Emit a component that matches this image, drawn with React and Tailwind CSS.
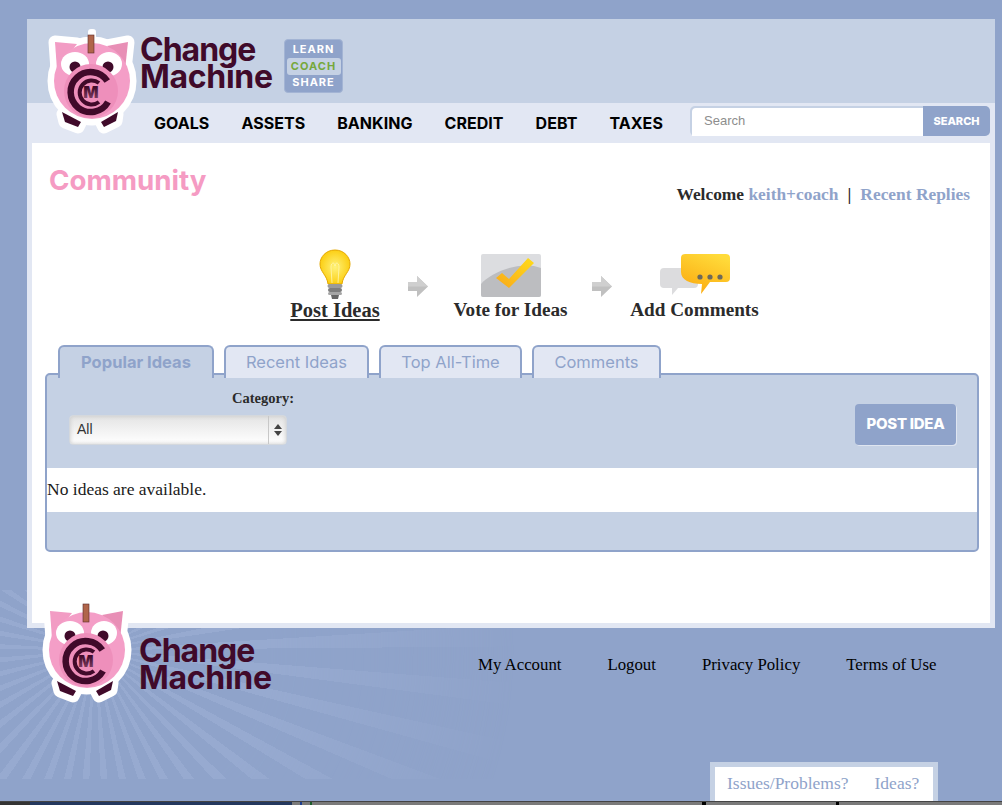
const serif = "font-['Liberation_Serif',serif]"
const sans = "font-['Inter',sans-serif]"

function Pig({ className }) {
    return (
        <svg viewBox="0 0 90 106" className={className}>
            <defs>
                <linearGradient id="pigM" x1="0" y1="0" x2="0" y2="1">
                    <stop offset="0.25" stopColor="#400a2a" />
                    <stop offset="1" stopColor="#8d4a6d" />
                </linearGradient>
            </defs>
            {/* white sticker outline */}
            <g fill="#fff" stroke="#fff" strokeWidth="13" strokeLinejoin="round">
                <circle cx="45" cy="53" r="38" />
                <path d="M8 14 L30 16 L10 42 Z" />
                <path d="M81 14 L60 18 L78 42 Z" />
                <path d="M16 86 L33 95 L31 99 L18 94 Z" />
                <path d="M70 86 L55 95 L57 99 L69 93 Z" />
            </g>
            <rect x="41" y="1" width="8" height="12" fill="#fff" rx="3" />
            <path d="M15 84 L34 94 L31 99 L18 94 Z" fill="#400a2a" />
            <path d="M71 84 L54 94 L57 99 L69 93 Z" fill="#400a2a" />
            <path d="M8 14 L30 16 L10 42 Z" fill="#f29cc4" />
            <path d="M81 14 L60 18 L78 42 Z" fill="#e88fb6" />
            <circle cx="45" cy="53" r="38" fill="#f49ec7" />
            <rect x="41" y="7" width="6" height="18" fill="#b0654a" stroke="#5a2a2a" strokeWidth="0.6" />
            <ellipse cx="28" cy="36" rx="14" ry="12" fill="#fff" />
            <ellipse cx="62" cy="36" rx="13" ry="12" fill="#fff" />
            <circle cx="28" cy="39" r="5.5" fill="#400a2a" />
            <circle cx="61" cy="39" r="5.5" fill="#400a2a" />
            <circle cx="44" cy="63" r="27" fill="#ee8fbb" />
            <path d="M 60.3 53 A 20 20 0 1 0 61 74" fill="none" stroke="#400a2a" strokeWidth="6.5" />
            <path d="M 52 55 A 12 12 0 1 0 52 74" fill="none" stroke="#400a2a" strokeWidth="4" />
            <text x="44" y="70" textAnchor="middle" fontSize="16" fontWeight="900" fontFamily="Inter, sans-serif" fill="url(#pigM)">M</text>
        </svg>
    )
}

function Wordmark({ className }) {
    return (
        <div className={`${sans} w-[134px] font-bold text-[#400a2a] text-[32px] leading-[27px] ${className}`}>
            <div className="tracking-[-1px]">Change</div>
            <div className="tracking-[-0.3px]">Machine</div>
        </div>
    )
}

function Bulb() {
    return (
        <svg viewBox="0 0 32 50" className="w-8 h-[50px]">
            <defs>
                <radialGradient id="bulb" cx="0.5" cy="0.5" r="0.6">
                    <stop offset="0" stopColor="#fff27a" />
                    <stop offset="1" stopColor="#fbc800" />
                </radialGradient>
            </defs>
            <path d="M16 1 C7 1 1 8 1 15 C1 23 8 26 9 35 L23 35 C24 26 31 23 31 15 C31 8 25 1 16 1 Z" fill="url(#bulb)" stroke="#e5a800" strokeWidth="1" />
            <path d="M13 34 L12 18 C12 13 16 13 16 17 C16 13 20 13 20 18 L19 34" fill="none" stroke="#fff6b0" strokeWidth="0.8" />
            <rect x="8.5" y="35" width="15" height="4" rx="2" fill="#9a9a9a" />
            <rect x="9" y="39" width="14" height="4" rx="2" fill="#7d7d7d" />
            <rect x="9" y="43" width="14" height="3" rx="1.5" fill="#a5a5a5" />
            <path d="M12 46 H20 L19 50 H13 Z" fill="#666" />
        </svg>
    )
}

function StepArrow() {
    return (
        <svg viewBox="0 0 20 21" className="w-5 h-[21px]">
            <path d="M0 6 H9 V0 L20 10.5 L9 21 V15 H0 Z" fill="#c0c0c0" />
            <path d="M0 6 H9 V0 L20 10.5 H0 Z" fill="#cfcfcf" />
        </svg>
    )
}

function VoteIcon() {
    return (
        <svg viewBox="0 0 60 43" className="w-[60px] h-[43px]">
            <defs>
                <linearGradient id="check" x1="0" y1="1" x2="1" y2="0">
                    <stop offset="0" stopColor="#f9a81a" />
                    <stop offset="1" stopColor="#ffdc1a" />
                </linearGradient>
            </defs>
            <rect width="60" height="43" rx="2" fill="#dcdde0" />
            <path d="M0 30 C10 18 40 6 60 14 V41 A2 2 0 0 1 58 43 H2 A2 2 0 0 1 0 41 Z" fill="#bcbdc0" />
            <path d="M15 24 L21 19 L28 25 L47 4 L53 9 L28 34 Z" fill="url(#check)" />
        </svg>
    )
}

function ChatIcon() {
    return (
        <svg viewBox="0 0 70 42" className="w-[70px] h-[42px]">
            <defs>
                <linearGradient id="chat" x1="0.2" y1="1" x2="0.7" y2="0">
                    <stop offset="0" stopColor="#fba90f" />
                    <stop offset="1" stopColor="#ffdb3a" />
                </linearGradient>
            </defs>
            <path d="M4 14 H34 A4 4 0 0 1 38 18 V30 A4 4 0 0 1 34 34 H18 L12 41 V34 H4 A4 4 0 0 1 0 30 V18 A4 4 0 0 1 4 14 Z" fill="#dcdcde" />
            <path d="M25 0 H66 A4 4 0 0 1 70 4 V24 A4 4 0 0 1 66 28 H50 L41 40 L42 30 C30 30 21 26 21 18 V4 A4 4 0 0 1 25 0 Z" fill="url(#chat)" />
            <circle cx="40" cy="23" r="2.6" fill="#6d6a5a" />
            <circle cx="50" cy="23" r="2.6" fill="#6d6a5a" />
            <circle cx="60" cy="23" r="2.6" fill="#6d6a5a" />
        </svg>
    )
}

const navItems = ['GOALS', 'ASSETS', 'BANKING', 'CREDIT', 'DEBT', 'TAXES']
const tabs = [
    { label: 'Popular Ideas', w: 'w-[156px]', active: true },
    { label: 'Recent Ideas', w: 'w-[145px]' },
    { label: 'Top All-Time', w: 'w-[143px]' },
    { label: 'Comments', w: 'w-[129px]' },
]
const footerLinks = ['My Account', 'Logout', 'Privacy Policy', 'Terms of Use']

export default function App() {
    return (
        <div className="relative h-[805px] overflow-hidden bg-[#8fa3ca] pt-[19px]">
            {/* sun rays behind the footer */}
            <div className="absolute left-0 right-0 top-[590px] h-[189px] bg-[repeating-conic-gradient(from_-1.5deg_at_95px_60px,#97aad0_0deg_3deg,#8fa3ca_3deg_8deg)] [mask-image:radial-gradient(circle_at_95px_60px,black_170px,transparent_420px)]" />

            <div className="relative ml-[27px] w-[968px]">
                {/* header */}
                <div className="h-[84px] bg-[#c5d1e4] flex">
                    <Wordmark className="ml-[113px] mt-[17px]" />
                    <div className={`${sans} ml-[10px] mt-[20px] w-[59px] h-[54px] rounded-sm bg-[#8fa3ca] border border-[#a3b4d4] flex flex-col items-center pt-[2px] text-[11px] leading-[15px] font-bold tracking-[1px] text-white`}>
                        <span>LEARN</span>
                        <span className="mt-[1px] w-[54px] h-[17px] rounded-[3px] bg-[#c5d1e4] text-[#76a83c] text-center leading-[17px]">COACH</span>
                        <span>SHARE</span>
                    </div>
                </div>

                {/* nav */}
                <div className="h-[40px] bg-[#e2e7f3] flex items-center">
                    <nav className={`${sans} ml-[127px] flex gap-8 text-[16px] tracking-[0.05px] font-bold text-black`}>
                        {navItems.map((item) => (
                            <span key={item}>{item}</span>
                        ))}
                    </nav>
                    <div className="ml-auto mr-[5px] -mt-1 flex h-[30px] w-[300px] rounded-[5px] bg-[#c5d1e4] pl-[2px] pt-[2px]">
                        <div className="flex-1 bg-white rounded-tl-[4px] pl-[12px] pt-[3px] text-[13px] text-[#8d8d8d] font-['Liberation_Sans',sans-serif]">Search</div>
                        <div className={`${sans} -mt-[2px] w-[67px] bg-[#8fa3ca] rounded-r-[5px] flex items-center justify-center text-[11px] font-extrabold text-white`}>SEARCH</div>
                    </div>
                </div>

                {/* content */}
                <div className="border-x-[5px] border-b-[5px] border-[#e2e7f3] bg-white h-[485px]">
                    <div className="flex items-start justify-between h-[60px] pl-[17px] pr-[20px] pt-[19px]">
                        <h1 className={`${sans} text-[27.7px] leading-[36px] font-bold text-[#f59bc3]`}>Community</h1>
                        <div className={`${serif} mt-[22px] text-[17.4px] leading-[21px] font-bold text-[#2b2b2b]`}>
                            Welcome <span className="text-[#8fa3ca]">keith+coach</span>
                            <span className="mx-[9px]">|</span>
                            <span className="text-[#8fa3ca]">Recent Replies</span>
                        </div>
                    </div>

                    {/* steps */}
                    <div className={`${serif} mt-[46px] h-[73px] flex items-end pl-[258px] text-[19.2px] leading-[24px] font-bold whitespace-nowrap text-[#2b2b2b]`}>
                        <div className="w-[90px] flex flex-col items-center">
                            <Bulb />
                            <span className="underline -mt-[1px] text-[20.5px]">Post Ideas</span>
                        </div>
                        <div className="ml-[28px] mb-[25px]"><StepArrow /></div>
                        <div className="ml-[25px] w-[115px] flex flex-col items-center">
                            <VoteIcon />
                            <span className="mt-[1px]">Vote for Ideas</span>
                        </div>
                        <div className="ml-[24px] mb-[25px]"><StepArrow /></div>
                        <div className="ml-[19px] w-[127px] flex flex-col items-center">
                            <ChatIcon />
                            <span className="mt-[2px]">Add Comments</span>
                        </div>
                    </div>

                    {/* tabs + panel */}
                    <div className="mt-[23px] ml-[13px] w-[934px]">
                        <div className="relative z-10 flex gap-[10px] pl-[13px] h-[33px]">
                            {tabs.map((tab) => (
                                <div
                                    key={tab.label}
                                    className={`${sans} ${tab.w} h-[33px] border-x-2 border-t-2 border-[#8fa3ca] rounded-t-[6px] flex items-center justify-center text-[16.5px] text-[#8fa3ca] ${tab.active ? 'bg-[#c5d1e4] font-bold' : 'bg-[#e2e7f3]'}`}
                                >
                                    {tab.label}
                                </div>
                            ))}
                        </div>
                        <div className="-mt-[5px] h-[179px] border-2 border-[#8fa3ca] rounded-[5px] bg-[#c5d1e4] flex flex-col overflow-hidden">
                            <div className="relative h-[93px]">
                                <div className={`${serif} absolute left-[185px] top-[13px] text-[14.5px] font-bold text-[#2b2b2b]`}>Category:</div>
                                <div className="absolute left-[22px] top-[40px] w-[218px] h-[30px] rounded-[4px] border border-[#d4d8dd] bg-gradient-to-b from-[#e4e4e4] via-[#f2f2f2] to-white shadow-[inset_0_0_4px_#c8c8c8] flex items-center pb-[2px] font-['Liberation_Sans',sans-serif] text-[14px] text-[#333]">
                                    <span className="flex-1 pl-[7px]">All</span>
                                    <span className="w-[18px] h-[28px] -mb-[2px] border-l border-[#c8c8c8] flex flex-col items-center justify-center">
                                        <span className="w-0 h-0 border-x-[4px] border-x-transparent border-b-[5px] border-b-[#444] mb-[2px]" />
                                        <span className="w-0 h-0 border-x-[4px] border-x-transparent border-t-[5px] border-t-[#444]" />
                                    </span>
                                </div>
                                <div className={`${sans} absolute left-[808px] top-[29px] w-[101px] h-[41px] rounded-[4px] bg-[#8fa3ca] shadow-[1px_1px_0_#dfe5f0] flex items-center justify-center text-[15px] font-extrabold tracking-[-0.3px] text-white`}>POST IDEA</div>
                            </div>
                            <div className={`${serif} h-[44px] bg-white flex items-center pb-[2px] text-[17.5px] text-[#1a1a1a]`}>No ideas are available.</div>
                        </div>
                    </div>
                </div>
            </div>

            {/* logos sit over the page edges */}
            <Pig className="absolute left-[47px] top-[28px] w-[90px] h-[106px]" />
            <Pig className="absolute left-[42px] top-[597px] w-[90px] h-[106px]" />

            {/* footer */}
            <div className="relative flex ml-[27px] w-[968px] h-[134px]">
                <Wordmark className="ml-[112px] mt-[9px]" />
                <div className={`${serif} absolute left-[451px] top-[24px] flex gap-[46px] text-[16.8px] text-black`}>
                    {footerLinks.map((link) => (
                        <span key={link}>{link}</span>
                    ))}
                </div>
            </div>
            <div className={`${serif} absolute left-[710px] top-[762px] w-[228px] h-[39px] border-x-[5px] border-t-[5px] border-[#c5d1e4] bg-white flex items-center gap-[26px] pl-[12px] pb-[2px] text-[17.5px] text-[#8fa3ca]`}>
                <span>Issues/Problems?</span>
                <span>Ideas?</span>
            </div>

            {/* strip of the desktop below the window */}
            <div className="absolute left-0 right-0 bottom-0 h-[4px] border-t border-[#444] bg-[#7a7a7a] flex">
                <div className="w-[30px] bg-[#333]" />
                <div className="w-[262px] bg-[#24385e]" />
                <div className="ml-[8px] w-[2px] bg-[#1f3f8f]" />
                <div className="ml-[8px] w-[2px] bg-[#1c5c2c]" />
                <div className="ml-[390px] w-[4px] bg-black" />
                <div className="ml-[130px] w-[3px] bg-black" />
            </div>
        </div>
    )
}
